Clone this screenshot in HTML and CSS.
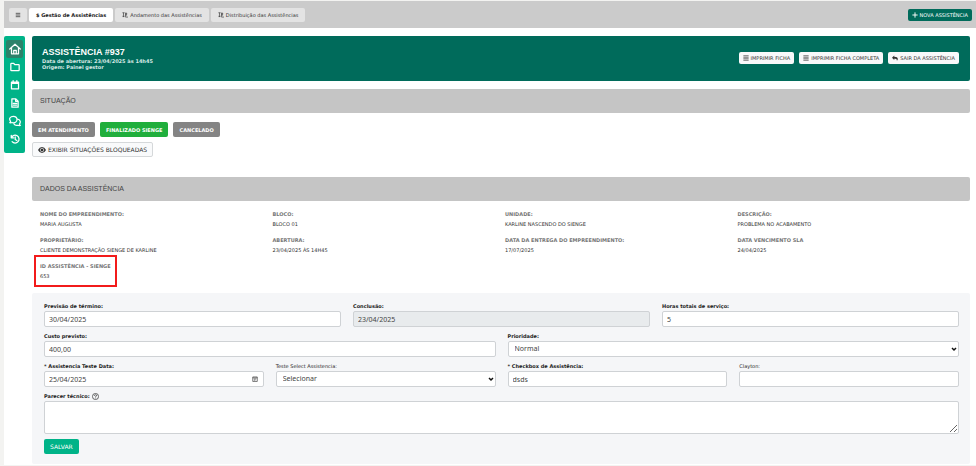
FILE: index.html
```html
<!DOCTYPE html>
<html lang="pt-BR">
<head>
<meta charset="utf-8">
<meta name="viewport" content="width=device-width, initial-scale=1">
<title>Assistência #937</title>
<link rel="stylesheet" href="styles.css">
</head>
<body>
<svg class="sprite" aria-hidden="true">
  <symbol id="bars" viewBox="0 0 16 16"><path d="M2 3.5h12M2 8h12M2 12.5h12" fill="none" stroke="currentColor" stroke-width="2"/></symbol>
  <symbol id="lines" viewBox="0 0 16 16"><path d="M1 2h14M1 6h14M1 10h14M1 14h14" fill="none" stroke="currentColor" stroke-width="1.8"/></symbol>
  <symbol id="sort" viewBox="0 0 16 16"><path d="M4 2v11M1 10l3 3.500 3-3.500M1 2h6M9.500 2v11M9.500 3h3v3h-3M9.500 8h4M9 13.500h7" fill="none" stroke="currentColor" stroke-width="1.700"/></symbol>
  <symbol id="chevron" viewBox="0 0 12 12"><path d="M2 4l4 4 4-4" fill="none" stroke="currentColor" stroke-width="3"/></symbol>
</svg>
<div class="app">
  <header class="topbar">
    <nav class="tabs" aria-label="Seções">
      <button class="tab menu" type="button" aria-label="Menu"><svg class="icon"><use href="#bars"/></svg></button>
      <a class="tab active" href="#">$ Gestão de Assistências</a>
      <a class="tab" href="#"><svg class="icon"><use href="#sort"/></svg>Andamento das Assistências</a>
      <a class="tab" href="#"><svg class="icon"><use href="#sort"/></svg>Distribuição das Assistências</a>
    </nav>
    <button class="btn primary" type="button"><svg class="icon" viewBox="0 0 16 16"><path d="M8 1v14M1 8h14" fill="none" stroke="currentColor" stroke-width="2.500"/></svg>NOVA ASSISTÊNCIA</button>
  </header>

  <div class="body">
    <nav class="sidebar" aria-label="Assistência">
      <a class="side active" href="#" aria-label="Início"><svg viewBox="0 0 24 24"><path d="M1.500 12L12 2.500 22.500 12M5 10v11.500h14V10M9.500 21v-6.500h5V21"/></svg></a>
      <a class="side" href="#" aria-label="Arquivos"><svg viewBox="0 0 24 24"><path d="M2 5q0-1.500 1.500-1.500H9l3 3h8.500Q22 6.500 22 8v11q0 1.500-1.500 1.500h-17Q2 20.500 2 19z"/></svg></a>
      <a class="side" href="#" aria-label="Agenda"><svg viewBox="0 0 24 24"><path d="M3.500 5h17v16h-17zM3.500 8h17M7.500 1.500V6M16.500 1.500V6M4 6h16"/></svg></a>
      <a class="side" href="#" aria-label="Documentos"><svg viewBox="0 0 24 24"><path d="M4.500 2H14l5.500 5.500V22h-15zM13.500 2v6h6M8 13h8M8 17h8"/></svg></a>
      <a class="side wide" href="#" aria-label="Mensagens"><svg viewBox="0 0 24 24"><path d="M1.500 15.500q2-1.500 1.500-3C-1 7 3 2.500 8.500 2.500S16 6 16 9s-3 6.500-7.500 6.500q-1.500 0-2.500-.500-2 1-4.500.500zM18 8.500c4.500 1 6 6 3 9.500q0 1.500 1.500 3-3 .500-4.500-.500c-4 1-7-.500-8-2.500"/></svg></a>
      <a class="side" href="#" aria-label="Histórico"><svg viewBox="0 0 24 24"><path d="M3 3v6h6M3.500 8.500A9.500 9.500 0 1 1 5 18.500M12.500 7v6l4 2.500"/></svg></a>
    </nav>

    <main class="content">
      <section class="banner">
        <div>
          <h1>ASSISTÊNCIA #937</h1>
          <p>Data de abertura: 23/04/2025 às 14h45</p>
          <p>Origem: Painel gestor</p>
        </div>
        <div class="actions">
          <button class="btn light" type="button"><svg class="icon"><use href="#lines"/></svg>IMPRIMIR FICHA</button>
          <button class="btn light" type="button"><svg class="icon"><use href="#lines"/></svg>IMPRIMIR FICHA COMPLETA</button>
          <button class="btn light" type="button"><svg class="icon" viewBox="0 0 16 16"><path d="M6 1v3.500c6 0 9.500 2 9.500 6 0 2-1 3.500-2.500 4.500 1-4-2-5-7-5v3.500L0 7z" fill="currentColor"/></svg>SAIR DA ASSISTÊNCIA</button>
        </div>
      </section>

      <h2>SITUAÇÃO</h2>
      <div class="status">
        <button class="chip" type="button">EM ATENDIMENTO</button>
        <button class="chip done" type="button">FINALIZADO SIENGE</button>
        <button class="chip" type="button">CANCELADO</button>
      </div>
      <button class="show" type="button"><svg class="icon" viewBox="0 0 16 16"><path d="M0 8Q3 2 8 2T16 8Q13 14 8 14T0 8z" fill="currentColor"/><circle cx="8" cy="8" r="3.500" fill="none" stroke="#fff" stroke-width="1.300"/></svg>EXIBIR SITUAÇÕES BLOQUEADAS</button>

      <h2 class="data-title">DADOS DA ASSISTÊNCIA</h2>
      <dl class="data">
        <div><dt>NOME DO EMPREENDIMENTO:</dt><dd>MARIA AUGUSTA</dd></div>
        <div><dt>BLOCO:</dt><dd>BLOCO 01</dd></div>
        <div><dt>UNIDADE:</dt><dd>KARLINE NASCENDO DO SIENGE</dd></div>
        <div><dt>DESCRIÇÃO:</dt><dd>PROBLEMA NO ACABAMENTO</dd></div>
        <div><dt>PROPRIETÁRIO:</dt><dd>CLIENTE DEMONSTRAÇÃO SIENGE DE KARLINE</dd></div>
        <div><dt>ABERTURA:</dt><dd>23/04/2025 ÀS 14H45</dd></div>
        <div><dt>DATA DA ENTREGA DO EMPREENDIMENTO:</dt><dd>17/07/2025</dd></div>
        <div><dt>DATA VENCIMENTO SLA</dt><dd>24/04/2025</dd></div>
        <div class="marked"><dt>ID ASSISTÊNCIA - SIENGE</dt><dd>653</dd></div>
      </dl>

      <form class="panel">
        <div class="row three">
          <div class="field"><label for="previsao">Previsão de término:</label><input id="previsao" value="30/04/2025"></div>
          <div class="field"><label for="conclusao">Conclusão:</label><input id="conclusao" value="23/04/2025" readonly></div>
          <div class="field"><label for="horas">Horas totais de serviço:</label><input id="horas" value="5"></div>
        </div>
        <div class="row two">
          <div class="field"><label for="custo">Custo previsto:</label><input id="custo" value="400,00"></div>
          <div class="field"><label for="prioridade">Prioridade:</label>
            <div class="overlay pick"><select id="prioridade"><option>Normal</option></select><svg><use href="#chevron"/></svg></div></div>
        </div>
        <div class="row four">
          <div class="field"><label for="data">* Assistencia Teste Data:</label>
            <div class="overlay date"><input id="data" value="25/04/2025"><svg viewBox="0 0 16 16"><path d="M2 2.500h12v12H2zM2 5h12M5 8h6M5 11h4" fill="none" stroke="currentColor" stroke-width="1.700"/></svg></div></div>
          <div class="field"><label class="optional" for="teste">Teste Select Assistencia:</label>
            <div class="overlay pick"><select id="teste"><option>Selecionar</option></select><svg><use href="#chevron"/></svg></div></div>
          <div class="field"><label for="checkbox">* Checkbox de Assistência:</label><input id="checkbox" value="dsds"></div>
          <div class="field"><label class="optional" for="clayton">Clayton:</label><input id="clayton"></div>
        </div>
        <div class="field"><label for="parecer">Parecer técnico: <svg class="help" viewBox="0 0 16 16"><circle cx="8" cy="8" r="7" fill="none" stroke="currentColor" stroke-width="1.500"/><path d="M5.500 6.300Q5.500 4 8 4t2.500 2.200Q10.500 7.500 8 8.500v1M8 10.800v1.600" fill="none" stroke="currentColor" stroke-width="1.500"/></svg></label><textarea id="parecer"></textarea></div>
        <button class="save" type="submit">SALVAR</button>
      </form>
    </main>
  </div>
</div>
</body>
</html>
```
FILE: styles.css
```css
* { box-sizing: border-box; }
body {
  margin: 0;
  padding: 1px 0 0 4px;
  background: #f3f3f1;
  color: #333;
  font: 5px/10px "DejaVu Sans", Verdana, sans-serif;
}
h1, h2, p, dl, dd { margin: 0; }
button, input, select, textarea { font: inherit; color: inherit; }
button { white-space: nowrap; }
a { color: inherit; text-decoration: none; }
.sprite { display: none; }
.icon { width: 6px; height: 6px; flex: none; }
.app { background: #fff; }

.topbar {
  display: flex;
  align-items: center;
  justify-content: space-between;
  padding: 7px 4px 6px 5px;
  background: #cbcbcb;
}
.tabs { display: flex; gap: 2px; }
.tab {
  display: flex;
  align-items: center;
  gap: 2px;
  height: 14px;
  padding: 0 7px;
  border: 0;
  border-radius: 2px;
  background: #e3e3e3;
}
.tab.menu { padding: 0 6px; }
.tab.active { background: #fff; color: #222; font-weight: bold; }
.btn {
  display: flex;
  align-items: center;
  gap: 2px;
  height: 12px;
  padding: 0 4px;
  border: 0;
  border-radius: 2px;
}
.primary { background: #006b5b; color: #fff; }
.light { background: #f8f9fa; color: #333; }

.body {
  display: flex;
  align-items: flex-start;
  gap: 7px;
  padding: 8px 6px 1px 0;
}
.sidebar {
  display: flex;
  flex-direction: column;
  width: 21px;
  padding: 4px 2px 5px;
  border-radius: 2px;
  background: #00b388;
  color: #fff;
}
.side {
  display: grid;
  place-items: center;
  height: 18px;
  border-radius: 2px;
}
.side.active { background: #2d826a; }
.side svg {
  width: 10px;
  height: 10px;
  fill: none;
  stroke: currentColor;
  stroke-width: 3;
  stroke-linejoin: round;
  stroke-linecap: round;
}
.side.active svg, .side.wide svg { width: 12px; height: 12px; stroke-width: 2.5; }
.content { flex: 1; min-width: 0; }
.banner {
  display: flex;
  align-items: center;
  justify-content: space-between;
  padding: 10px 11px 11px 10px;
  border-radius: 2px;
  background: #006b5b;
  color: #fff;
}
.banner h1 { font: bold 9px/12px "Liberation Sans", Arial, sans-serif; }
.banner p { font-weight: bold; line-height: 6px; color: #d5e9e5; }
.actions { display: flex; gap: 5px; }
h2 {
  margin-top: 8px;
  padding: 0 8px;
  border-radius: 2px;
  background: #c5c5c5;
  color: #444;
  font: 7px/24px "Liberation Sans", Arial, sans-serif;
}
.status { display: flex; gap: 5px; margin: 9px 0 5px; }
.chip {
  height: 15px;
  padding: 0 6px;
  border: 0;
  border-radius: 2px;
  background: #848484;
  color: #fff;
  font-weight: bold;
}
.chip.done { background: #20ae3c; }
.show {
  display: flex;
  align-items: center;
  gap: 2px;
  height: 15px;
  padding: 0 5px;
  border: 1px solid #d5d8da;
  border-radius: 2px;
  background: #f9fafb;
  font-size: 6px;
}
.show .icon { width: 8px; height: 8px; }
.data-title { margin-top: 20px; }

.data {
  display: grid;
  grid-template-columns: repeat(4, 1fr);
  row-gap: 6px;
  padding: 8px 0 0 8px;
}
.data dt { color: #777; font-weight: bold; }
.marked {
  justify-self: start;
  outline: 2px solid #f21b1b;
  outline-offset: 4px;
}
.panel {
  margin-top: 12px;
  padding: 8px 11px 10px 12px;
  border-radius: 2px;
  background: #f5f6f8;
}
.row { display: grid; gap: 12px; margin-bottom: 4px; }
.three { grid-template-columns: repeat(3, 1fr); }
.two { grid-template-columns: repeat(2, 1fr); }
.four { grid-template-columns: repeat(4, 1fr); }
.field { min-width: 0; }
label { display: flex; align-items: center; gap: 2px; height: 10px; font-weight: bold; color: #222; }
label.optional { font-weight: normal; }
.help { width: 7px; height: 7px; }
input, select, textarea {
  display: block;
  width: 100%;
  height: 16px;
  padding: 0 4px;
  border: 1px solid #cfd2d5;
  border-radius: 2px;
  background: #fff;
  color: #444;
  font-family: "Noto Sans", sans-serif;
  font-size: 7px;
}
select { appearance: none; padding: 0 6px; }
input[readonly] { background: #e8ebed; }
textarea { height: 33px; resize: vertical; }
.overlay { display: grid; align-items: center; }
.overlay > * { grid-area: 1 / 1; }
.overlay svg { justify-self: end; width: 6px; height: 6px; pointer-events: none; }
.date svg { margin-right: 6px; }
.pick svg { margin-right: 2px; color: #111; }
.save {
  display: block;
  height: 15px;
  margin-top: 5px;
  padding: 0 6px;
  border: 0;
  border-radius: 2px;
  background: #00b388;
  color: #fff;
  font-size: 6px;
}
```
